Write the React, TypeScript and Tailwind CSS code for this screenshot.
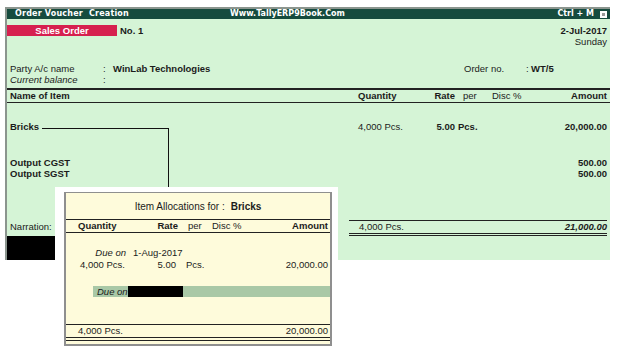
const ink = 'text-[#1b1b1b]';

function MainTableHead() {
  return (
    <div className="flex h-[15px] items-center pl-[3px] pr-[3px] border-t-2 border-b border-[#222]">
      <div className="w-[348px] font-bold">Name of Item</div>
      <div className="w-[75px] font-bold">Quantity</div>
      <div className="w-[22px] text-right font-bold">Rate</div>
      <div className="w-[34px] pl-[8px]">per</div>
      <div className="w-[41px] pl-[3px]">Disc %</div>
      <div className="flex-1 text-right font-bold">Amount</div>
    </div>
  );
}

function Popup() {
  return (
    <div className="absolute left-[55px] top-[187px] w-[283px] h-[167px] bg-white pl-[9px] pt-[5px] pr-[6px]">
      <div className="h-[154px] border-2 border-t border-[#8f8f8f] bg-[#fefbdb] flex flex-col">
        <div className="h-[26px] flex items-center justify-center pt-[2px] text-[10px]">
          <span>Item Allocations for :</span>
          <span className="ml-[6px] font-bold">Bricks</span>
        </div>
        <div className="flex h-[14px] items-center border-t border-b border-[#222] pl-[12px] pr-[2px]">
          <div className="w-[72px] font-bold">Quantity</div>
          <div className="w-[28px] text-right font-bold">Rate</div>
          <div className="w-[34px] pl-[10px]">per</div>
          <div className="w-[40px]">Disc %</div>
          <div className="flex-1 text-right font-bold">Amount</div>
        </div>
        <div className="h-[14px]" />
        <div className="flex h-[12px] items-center">
          <span className="w-[60px] text-right italic">Due on</span>
          <span className="ml-[7px]">1-Aug-2017</span>
        </div>
        <div className="flex h-[11px] items-center pl-[14px] pr-[2px]">
          <div className="w-[72px]">4,000 Pcs.</div>
          <div className="w-[24px] text-right">5.00</div>
          <div className="w-[40px] pl-[10px]">Pcs.</div>
          <div className="flex-1 text-right">20,000.00</div>
        </div>
        <div className="h-[16px]" />
        <div className="ml-[27px] flex h-[11px] items-center bg-[#a9c8a6]">
          <span className="pl-[4px] w-[35px] italic">Due on</span>
          <span className="h-[11px] w-[55px] bg-black" />
        </div>
        <div className="h-[27px]" />
        <div className="flex h-[12px] items-center border-t border-[#222] pl-[12px] pr-[2px]">
          <div className="flex-1">4,000 Pcs.</div>
          <div className="text-right">20,000.00</div>
        </div>
        <div className="h-[4px] border-t border-b border-[#222] mt-[1px]" />
        <div className="flex-1" />
      </div>
    </div>
  );
}

export default function App() {
  return (
    <div
      className={`relative h-[354px] w-[617px] overflow-hidden bg-white text-[9.5px] leading-none ${ink}`}
      style={{ fontFamily: '"Liberation Sans", Arial, sans-serif' }}
    >
      <div className="ml-[5px] mt-[7px] w-[605px] border-l-2 border-t-2 border-[#8b958e]">
        {/* title bar */}
        <div
          className="flex h-[10px] items-center bg-[#164b3e] pl-[8px] pr-[3px] text-[8px] font-bold text-white"
          style={{ fontFamily: '"DejaVu Sans", Verdana, sans-serif' }}
        >
          <div className="w-[215px] tracking-[0.2px]">Order Voucher&nbsp; Creation</div>
          <div className="flex-1">Www.TallyERP9Book.Com</div>
          <div className="mr-[6px]">Ctrl + M</div>
          <div className="flex h-[7px] w-[7px] items-center justify-center bg-white">
            <div className="h-[3px] w-[3px] bg-[#9a9a9a]" />
          </div>
        </div>

        <div className="flex h-[241px] flex-col bg-[#d5f4d6]">
          {/* voucher type + date */}
          <div className="mt-[6px] flex h-[11px] items-center pr-[3px]">
            <div className="flex h-[11px] w-[110px] items-center justify-center bg-[#d6204f] font-bold text-white">
              Sales Order
            </div>
            <div className="ml-[3px] font-bold">No. 1</div>
            <div className="flex-1 text-right font-bold">2-Jul-2017</div>
          </div>
          <div className="flex h-[12px] items-center justify-end pr-[3px]">Sunday</div>

          {/* party */}
          <div className="mt-[15px] flex h-[11px] items-center pl-[3px] pr-[3px]">
            <div className="w-[93px]">Party A/c name</div>
            <div className="w-[10px]">:</div>
            <div className="w-[351px] font-bold">WinLab Technologies</div>
            <div className="w-[62px]">Order no.</div>
            <div className="w-[5px]">:</div>
            <div className="font-bold">WT/5</div>
          </div>
          <div className="flex h-[11px] items-center pl-[3px]">
            <div className="w-[93px] italic">Current balance</div>
            <div>:</div>
          </div>

          <div className="mt-[3px]">
            <MainTableHead />
          </div>

          {/* item */}
          <div className="mt-[18px] flex h-[12px] items-center pl-[3px] pr-[3px]">
            <div className="w-[348px] font-bold">Bricks</div>
            <div className="w-[75px]">4,000 Pcs.</div>
            <div className="w-[22px] text-right font-bold">5.00</div>
            <div className="w-[34px] pl-[3px] font-bold">Pcs.</div>
            <div className="flex-1 text-right font-bold">20,000.00</div>
          </div>

          <div className="mt-[24px] flex h-[11px] items-center justify-between pl-[3px] pr-[3px] font-bold">
            <span>Output CGST</span>
            <span>500.00</span>
          </div>
          <div className="flex h-[12px] items-center justify-between pl-[3px] pr-[3px] font-bold">
            <span>Output SGST</span>
            <span>500.00</span>
          </div>

          {/* totals + narration */}
          <div className="mt-[40px] flex h-[13px] items-center pl-[3px] pr-[3px]">
            <div className="w-[339px]">Narration:</div>
            <div className="flex h-[13px] flex-1 items-center border-t border-[#222] pl-[10px]">
              <span className="flex-1">4,000 Pcs.</span>
              <span className="font-bold italic">21,000.00</span>
            </div>
          </div>
          <div className="flex flex-1 pr-[3px]">
            <div className="mt-[3px] w-[49px] self-stretch bg-black" />
            <div className="ml-[293px] h-[3px] flex-1 border-t border-b border-[#222]" />
          </div>
        </div>
      </div>

      {/* connector from item to allocation popup */}
      <div className="absolute left-[42px] top-[128px] h-px w-[127px] bg-[#111]" />
      <div className="absolute left-[168px] top-[128px] h-[64px] w-px bg-[#111]" />

      <Popup />
    </div>
  );
}
